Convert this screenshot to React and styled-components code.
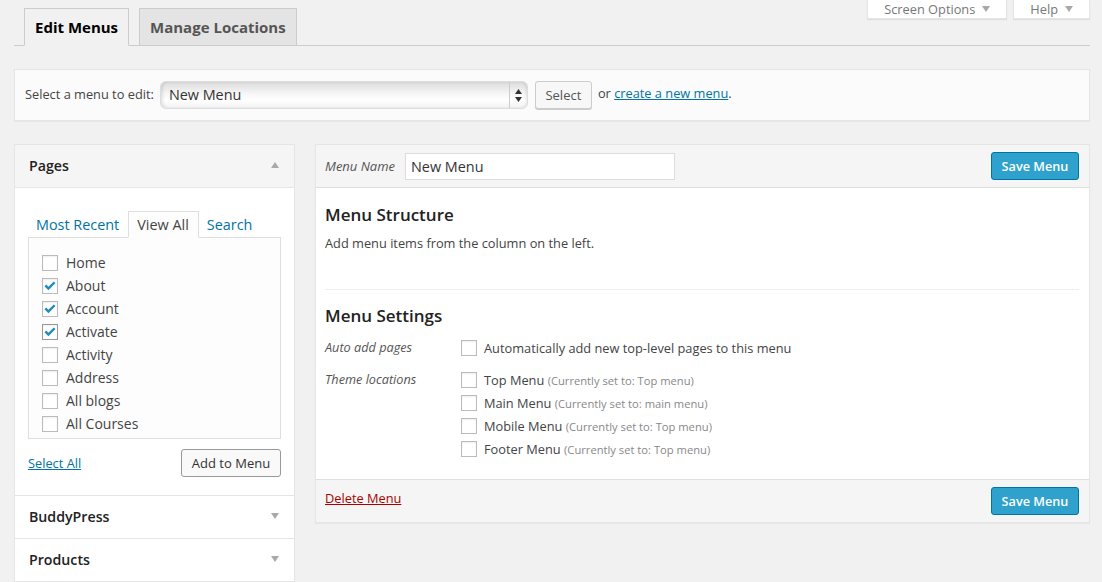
import styled, { createGlobalStyle } from "styled-components";

const pageItems = [
  { name: "Home" },
  { name: "About", checked: true },
  { name: "Account", checked: true },
  { name: "Activate", checked: true, focused: true },
  { name: "Activity" },
  { name: "Address" },
  { name: "All blogs" },
  { name: "All Courses" },
];

const locations = [
  { name: "Top Menu", current: "Top menu" },
  { name: "Main Menu", current: "main menu" },
  { name: "Mobile Menu", current: "Top menu" },
  { name: "Footer Menu", current: "Top menu" },
];

const Check = ({ checked, focused }) => (
  <CheckBox $focused={focused}>
    {checked && (
      <svg width="12" height="10" viewBox="0 0 12 10">
        <path d="M0.5 5.2 L2.2 3.6 L4.4 5.7 L9.8 0.4 L11.5 2 L4.4 9.2 Z" fill="#1e8cbe" />
      </svg>
    )}
  </CheckBox>
);

const Arrow = ({ up }) => (
  <ArrowIcon width="8" height="6" viewBox="0 0 8 6">
    <path d={up ? "M4 0 L8 6 L0 6 Z" : "M0 0 L8 0 L4 6 Z"} fill="#a9a9a9" />
  </ArrowIcon>
);

const App = () => {
  return (
    <Page>
      <GlobalStyle />
      <TabNav>
        <Tabs>
          <NavTab $active>Edit Menus</NavTab>
          <NavTab>Manage Locations</NavTab>
        </Tabs>
        <MetaLinks>
          <MetaLink>
            Screen Options <Arrow />
          </MetaLink>
          <MetaLink>
            Help <Arrow />
          </MetaLink>
        </MetaLinks>
      </TabNav>

      <ManageBar>
        <BarText>Select a menu to edit:</BarText>
        <FakeSelect>
          <SelectValue>New Menu</SelectValue>
          <SelectArrows>
            <svg width="7" height="13" viewBox="0 0 7 13">
              <path d="M3.5 0 L7 5 L0 5 Z M0 8 L7 8 L3.5 13 Z" fill="#333" />
            </svg>
          </SelectArrows>
        </FakeSelect>
        <SelectButton>Select</SelectButton>
        <BarText $raised>
          or <TextLink href="#">create a new menu</TextLink>.
        </BarText>
      </ManageBar>

      <Columns>
        <Sidebar>
          <SectionHead $shaded>
            <SectionTitle>Pages</SectionTitle>
            <Arrow up />
          </SectionHead>
          <SectionBody>
            <PickerTabs>
              <PickerTab>Most Recent</PickerTab>
              <PickerTab $active>View All</PickerTab>
              <PickerTab>Search</PickerTab>
            </PickerTabs>
            <PickerList>
              {pageItems.map((item) => (
                <PickerRow key={item.name}>
                  <Check checked={item.checked} focused={item.focused} />
                  {item.name}
                </PickerRow>
              ))}
            </PickerList>
            <PickerFoot>
              <TextLink href="#">Select All</TextLink>
              <AddButton>Add to Menu</AddButton>
            </PickerFoot>
          </SectionBody>
          <SectionHead>
            <SectionTitle>BuddyPress</SectionTitle>
            <Arrow />
          </SectionHead>
          <SectionHead>
            <SectionTitle>Products</SectionTitle>
            <Arrow />
          </SectionHead>
        </Sidebar>

        <Editor>
          <EditorHead>
            <NameField>
              <NameLabel>Menu Name</NameLabel>
              <NameInput>New Menu</NameInput>
            </NameField>
            <SaveButton>Save Menu</SaveButton>
          </EditorHead>
          <EditorBody>
            <Heading>Menu Structure</Heading>
            <Hint>Add menu items from the column on the left.</Hint>
            <Divider />
            <Heading>Menu Settings</Heading>
            <SettingRow>
              <SettingLabel>Auto add pages</SettingLabel>
              <SettingOptions>
                <OptionRow>
                  <Check />
                  Automatically add new top-level pages to this menu
                </OptionRow>
              </SettingOptions>
            </SettingRow>
            <SettingRow>
              <SettingLabel>Theme locations</SettingLabel>
              <SettingOptions>
                {locations.map((loc) => (
                  <OptionRow key={loc.name}>
                    <Check />
                    <span>
                      {loc.name} <Current>(Currently set to: {loc.current})</Current>
                    </span>
                  </OptionRow>
                ))}
              </SettingOptions>
            </SettingRow>
          </EditorBody>
          <EditorFoot>
            <DeleteLink href="#">Delete Menu</DeleteLink>
            <SaveButton>Save Menu</SaveButton>
          </EditorFoot>
        </Editor>
      </Columns>
    </Page>
  );
};

const GlobalStyle = createGlobalStyle`
  html, body {
    margin: 0;
    background: #f1f1f1;
  }
  * {
    box-sizing: border-box;
  }
`;

const Page = styled.div`
  width: 1102px;
  height: 582px;
  overflow: hidden;
  padding: 8px 12px 0 14px;
  font-family: "Open Sans", sans-serif;
  font-size: 13px;
  color: #444;
`;

const TabNav = styled.div`
  display: flex;
  justify-content: space-between;
  align-items: flex-start;
  height: 38px;
  border-bottom: 1px solid #ccc;
`;

const Tabs = styled.div`
  display: flex;
  gap: 10px;
  padding-left: 10px;
`;

const NavTab = styled.div`
  height: ${(p) => (p.$active ? "38px" : "37px")};
  padding: 0 10px;
  border: 1px solid #ccc;
  border-bottom: ${(p) => (p.$active ? "1px solid #f1f1f1" : "none")};
  background: ${(p) => (p.$active ? "#f1f1f1" : "#e4e4e4")};
  color: ${(p) => (p.$active ? "#000" : "#555")};
  font-size: 15px;
  font-weight: 700;
  line-height: 37px;
`;

const MetaLinks = styled.div`
  display: flex;
  gap: 6px;
  margin-top: -8px;
`;

const MetaLink = styled.div`
  display: flex;
  align-items: center;
  gap: 7px;
  height: 19px;
  padding: 0 16px;
  background: #fff;
  box-shadow: 0 1px 1px rgba(0, 0, 0, 0.08);
  border: 1px solid #e5e5e5;
  border-top: none;
  color: #777;
  font-size: 12.8px;
  line-height: 11px;
  overflow: hidden;
`;

const ArrowIcon = styled.svg`
  flex: none;
`;

const ManageBar = styled.div`
  display: flex;
  align-items: center;
  height: 52px;
  margin-top: 23px;
  padding-left: 10px;
  border: 1px solid #e5e5e5;
  background: #fbfbfb;
  box-shadow: 0 1px 1px rgba(0, 0, 0, 0.04);
  font-size: 12.8px;
  color: #444;
`;

const BarText = styled.span`
  margin-bottom: ${(p) => (p.$raised ? "4px" : "2px")};
`;

const FakeSelect = styled.div`
  display: flex;
  width: 368px;
  height: 28px;
  margin: 0 7px 0 6px;
  border: 1px solid #ddd;
  border-radius: 6px;
  background: linear-gradient(#dcdcdc, #f6f6f6 45%, #fff 70%, #f2f2f2);
  box-shadow: inset 3px 0 3px -1px rgba(0, 0, 0, 0.1), inset -2px 0 3px -1px rgba(0, 0, 0, 0.1);
  font-size: 14.4px;
  color: #333;
`;

const SelectValue = styled.div`
  flex: 1;
  padding-left: 8px;
  line-height: 26px;
`;

const SelectArrows = styled.div`
  display: flex;
  align-items: center;
  justify-content: center;
  width: 18px;
  border-left: 1px solid #ccc;
`;

const SelectButton = styled.div`
  width: 57px;
  height: 28px;
  border: 1px solid #ccc;
  border-radius: 3px;
  background: #f7f7f7;
  box-shadow: 0 1px 0 #ccc;
  color: #555;
  font-size: 13px;
  line-height: 27px;
  text-align: center;
  margin-right: 6px;
`;

const TextLink = styled.a`
  color: #0074a2;
  text-decoration: underline;
`;

const Columns = styled.div`
  display: flex;
  gap: 20px;
  margin-top: 23px;
  align-items: flex-start;
`;

const Sidebar = styled.div`
  width: 281px;
  border: 1px solid #e5e5e5;
  background: #fff;
`;

const SectionHead = styled.div`
  display: flex;
  align-items: center;
  justify-content: space-between;
  height: 43px;
  padding: 0 15px 2px 14px;
  border-bottom: 1px solid #e5e5e5;
  background: ${(p) => (p.$shaded ? "#f5f5f5" : "#fff")};
`;

const SectionTitle = styled.h3`
  margin: 0;
  color: #222;
  font-size: 14.2px;
  font-weight: 600;
`;

const SectionBody = styled.div`
  padding: 23px 13px 18px;
  border-bottom: 1px solid #e5e5e5;
`;

const PickerTabs = styled.div`
  display: flex;
  align-items: flex-end;
  height: 27px;
  margin-bottom: -1px;
`;

const PickerTab = styled.div`
  height: 27px;
  padding: ${(p) => (p.$active ? "0 9px 0 8px" : "0 7px")};
  margin-right: ${(p) => (p.$active ? "0" : "1px")};
  border: 1px solid ${(p) => (p.$active ? "#dfdfdf" : "transparent")};
  border-bottom-color: ${(p) => (p.$active ? "#fdfdfd" : "transparent")};
  background: ${(p) => (p.$active ? "#fdfdfd" : "transparent")};
  color: ${(p) => (p.$active ? "#444" : "#0074a2")};
  font-size: 14.4px;
  line-height: 26px;
`;

const PickerList = styled.div`
  height: 202px;
  padding: 13px 13px 0;
  border: 1px solid #dfdfdf;
  background: #fdfdfd;
`;

const PickerRow = styled.div`
  display: flex;
  align-items: center;
  gap: 8px;
  height: 23px;
  font-size: 14px;
  color: #444;
`;

const CheckBox = styled.span`
  display: inline-flex;
  align-items: center;
  justify-content: center;
  flex: none;
  width: 16px;
  height: 16px;
  border: 1px solid ${(p) => (p.$focused ? "#999" : "#bbb")};
  background: #fff;
  box-shadow: inset 0 1px 2px rgba(0, 0, 0, 0.07);
`;

const PickerFoot = styled.div`
  display: flex;
  align-items: center;
  justify-content: space-between;
  margin-top: 10px;
  font-size: 12.8px;
`;

const AddButton = styled.div`
  width: 100px;
  height: 28px;
  border: 1px solid #999;
  border-radius: 3px;
  background: #f9f9f9;
  color: #333;
  font-size: 13px;
  line-height: 26px;
  text-align: center;
`;

const Editor = styled.div`
  width: 775px;
  border: 1px solid #e5e5e5;
  background: #fff;
  box-shadow: 0 1px 1px rgba(0, 0, 0, 0.04);
`;

const EditorHead = styled.div`
  display: flex;
  align-items: center;
  justify-content: space-between;
  height: 43px;
  padding: 0 10px 0 9px;
  border-bottom: 1px solid #dfdfdf;
  background: #f5f5f5;
`;

const NameField = styled.div`
  display: flex;
  align-items: center;
  gap: 10px;
`;

const NameLabel = styled.span`
  color: #555;
  font-size: 13px;
  font-style: italic;
`;

const NameInput = styled.div`
  width: 270px;
  height: 27px;
  padding-left: 5px;
  border: 1px solid #ddd;
  background: #fff;
  color: #333;
  font-size: 14.4px;
  line-height: 25px;
`;

const SaveButton = styled.div`
  width: 88px;
  height: 28px;
  border: 1px solid #0074a2;
  border-radius: 3px;
  background: #2ea2cc;
  color: #fff;
  font-size: 12.7px;
  font-weight: 600;
  line-height: 26px;
  text-align: center;
`;

const EditorBody = styled.div`
  height: 291px;
  padding: 15px 10px 0 9px;
`;

const Heading = styled.h3`
  margin: 0;
  color: #222;
  font-size: 17px;
  font-weight: 600;
  line-height: 24px;
`;

const Hint = styled.p`
  margin: 6px 0 0;
  color: #444;
  font-size: 12.8px;
  line-height: 20px;
`;

const Divider = styled.div`
  height: 1px;
  margin: 36px 0 14px;
  background: #eee;
`;

const SettingRow = styled.div`
  display: flex;
  margin-top: 8px;
  & + & {
    margin-top: 9px;
  }
`;

const SettingLabel = styled.div`
  width: 136px;
  color: #555;
  font-size: 12.7px;
  font-style: italic;
  line-height: 23px;
`;

const SettingOptions = styled.div`
  display: flex;
  flex-direction: column;
`;

const OptionRow = styled.div`
  display: flex;
  align-items: center;
  gap: 7px;
  height: 23px;
  color: #444;
  font-size: 12.8px;
`;

const Current = styled.span`
  color: #888;
  font-size: 11.2px;
`;

const EditorFoot = styled.div`
  display: flex;
  align-items: center;
  justify-content: space-between;
  height: 43px;
  padding: 0 10px 0 9px;
  border-top: 1px solid #dfdfdf;
  background: #f5f5f5;
`;

const DeleteLink = styled.a`
  margin-top: -6px;
  color: #a00;
  font-size: 12.8px;
  text-decoration: underline;
`;

export default App;
